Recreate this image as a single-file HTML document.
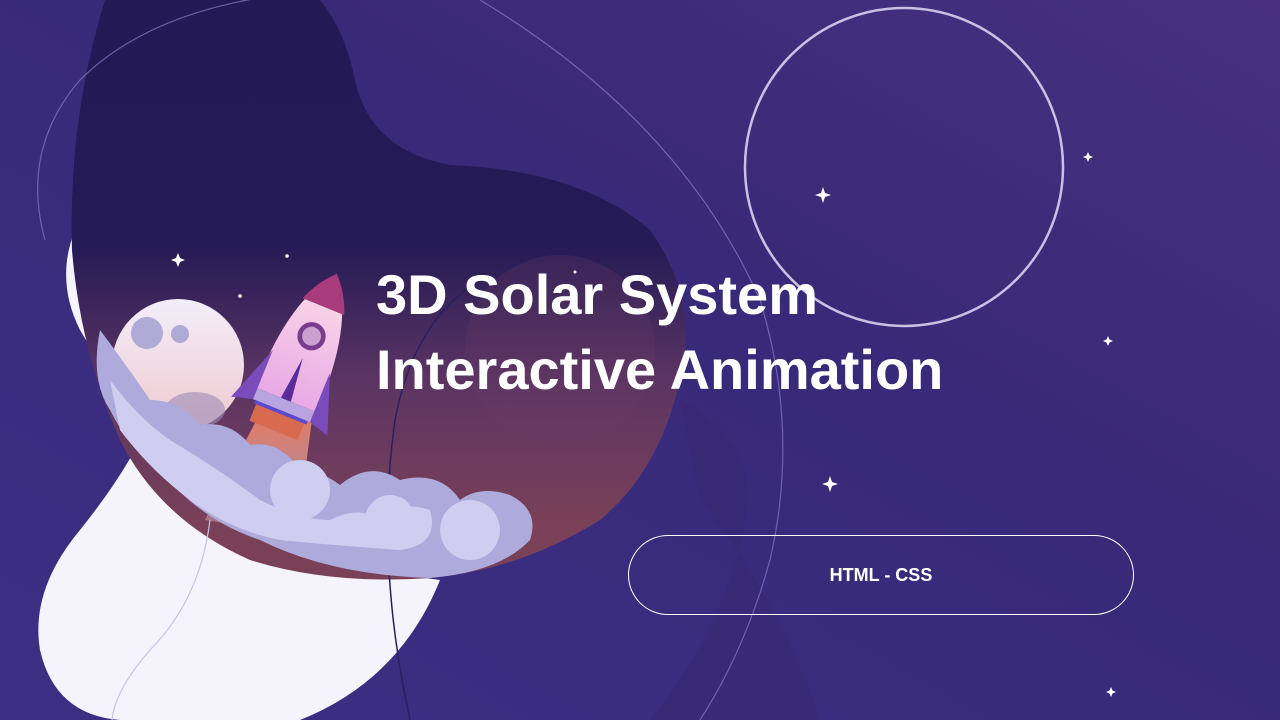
<!DOCTYPE html>
<html><head><meta charset="utf-8"><style>
html,body{margin:0;padding:0;width:1280px;height:720px;overflow:hidden;}
body{background:#3a2c7e;font-family:"Liberation Sans",sans-serif;position:relative;}
svg{position:absolute;left:0;top:0;}
.t{position:absolute;left:376px;color:#fff;font-weight:bold;font-size:56px;letter-spacing:0px;white-space:nowrap;line-height:64px;}
.btn{position:absolute;left:628px;top:535px;width:504px;height:78px;border:1.5px solid #fff;border-radius:40px;color:#fff;font-weight:bold;font-size:18px;display:flex;align-items:center;justify-content:center;}
</style></head><body>
<svg width="1280" height="720" viewBox="0 0 1280 720">
<defs>
<linearGradient id="bg" x1="0" y1="1" x2="1" y2="0">
<stop offset="0" stop-color="#3c2e84"/><stop offset="0.6" stop-color="#382a78"/><stop offset="1" stop-color="#48307e"/></linearGradient>
<linearGradient id="blob" x1="0" y1="0" x2="0" y2="1">
<stop offset="0" stop-color="#231a55"/><stop offset="0.42" stop-color="#241a55"/><stop offset="0.65" stop-color="#5a3463"/><stop offset="0.9" stop-color="#7a4058"/></linearGradient>
<linearGradient id="flame" x1="0" y1="0" x2="0" y2="1">
<stop offset="0" stop-color="#e7785a"/><stop offset="1" stop-color="#f3d4e4" stop-opacity="0.3"/></linearGradient>
<linearGradient id="rock" x1="0" y1="0" x2="0" y2="1">
<stop offset="0" stop-color="#fde0e8"/><stop offset="1" stop-color="#e9a9e6"/></linearGradient>
<linearGradient id="moon" x1="0" y1="0" x2="0" y2="1">
<stop offset="0" stop-color="#f2eefa"/><stop offset="1" stop-color="#f0c9cf"/></linearGradient>
</defs>
<rect width="1280" height="720" fill="url(#bg)"/>
<path d="M680 400 Q760 440 745 520 Q730 620 650 720 L820 720 Q780 600 700 500 Z" fill="#352870" opacity="0.5"/>
<path d="M75 230 Q55 280 80 330 Q110 380 140 440 Q120 480 80 530 Q30 590 40 650 Q55 715 120 720 L300 720 Q400 680 440 580 L300 560 L140 440 Z" fill="#f5f3fb"/>
<path d="M105 0 L320 0 Q345 30 355 80 Q370 150 450 165 Q580 170 650 230 Q700 300 680 380 Q660 470 600 520 Q520 570 430 578 Q330 585 250 560 Q160 520 120 440 Q80 350 72 250 Q68 120 105 0Z" fill="url(#blob)"/>
<path d="M45 240 Q20 150 80 80 Q160 0 330 -10" fill="none" stroke="#8a7ac8" stroke-width="1.2" opacity="0.7"/>
<path d="M480 0 Q680 120 760 300 Q800 430 770 560 Q745 650 700 720" fill="none" stroke="#8a7ac8" stroke-width="1.2" opacity="0.7"/>
<path d="M520 265 Q420 290 395 420 Q375 560 410 720" fill="none" stroke="#2a2060" stroke-width="1.5"/>
<path d="M210 520 Q200 600 150 650 Q115 690 112 720" fill="none" stroke="#c9c4e6" stroke-width="1.2"/>
<circle cx="560" cy="350" r="95" fill="#6a3b62" opacity="0.25"/>
<circle cx="178" cy="365" r="66" fill="url(#moon)"/>
<circle cx="147" cy="333" r="16" fill="#b0abd6"/>
<circle cx="180" cy="334" r="9" fill="#b0abd6"/>
<ellipse cx="195" cy="410" rx="30" ry="18" fill="#9a8ab8" opacity="0.6"/>
<path d="M262 410 L312 420 Q305 470 298 535 L205 520 Q235 460 262 410Z" fill="url(#flame)"/>
<g transform="translate(308 345) rotate(22) scale(1.18) translate(-310 -330)">
<rect x="288" y="392" width="44" height="16" fill="#d86a50"/>
<path d="M310 265 Q340 300 338 380 L282 380 Q280 300 310 265Z" fill="url(#rock)"/>
<path d="M310 265 Q323 278 329 295 L291 295 Q297 278 310 265Z" fill="#a83b7c"/>
<circle cx="310" cy="322" r="12" fill="#7a3d8e"/><circle cx="310" cy="322" r="8" fill="#c9a0cf"/>
<path d="M284 345 L266 395 L284 390Z" fill="#7a4bbb"/>
<path d="M336 345 L354 395 L336 390Z" fill="#7a4bbb"/>
<path d="M310 342 L316 392 L304 392Z" fill="#5a2c9a"/>
<rect x="284" y="380" width="52" height="10" fill="#b7a4e0"/>
<rect x="286" y="390" width="48" height="3" fill="#5a4ad0"/>
</g>
<g fill="#aeaadb">
<path d="M100 330 Q90 380 110 410 Q130 450 160 470 Q200 520 260 540 Q330 575 430 578 Q500 572 530 540 Q540 510 510 495 Q480 485 460 500 Q440 470 400 480 Q370 460 340 485 Q320 470 300 470 Q280 440 250 445 Q230 420 200 425 Q180 400 150 400 Q130 370 100 330Z"/>
</g>
<g fill="#cfcdf0">
<path d="M110 380 Q140 420 170 440 Q220 470 260 500 Q300 520 330 520 Q360 505 380 520 Q400 500 430 510 Q440 545 400 550 Q330 545 280 540 Q230 530 190 500 Q150 470 120 430Z"/>
<circle cx="300" cy="490" r="30"/><circle cx="470" cy="530" r="30"/><circle cx="390" cy="520" r="25"/>
</g>
<g fill="#fff">
<path d="M178 253 l2 5 l5 2 l-5 2 l-2 5 l-2 -5 l-5 -2 l5 -2z"/>
<circle cx="287" cy="256" r="1.8"/><circle cx="240" cy="296" r="1.8"/><circle cx="575" cy="272" r="1.5"/>
<path d="M823 187 l2 6 l6 2 l-6 2 l-2 6 l-2 -6 l-6 -2 l6 -2z"/>
<path d="M830 476 l2 6 l6 2 l-6 2 l-2 6 l-2 -6 l-6 -2 l6 -2z"/>
<path d="M1088 152 l1.5 3.5 l3.5 1.5 l-3.5 1.5 l-1.5 3.5 l-1.5 -3.5 l-3.5 -1.5 l3.5 -1.5z"/>
<path d="M1108 336 l1.5 3.5 l3.5 1.5 l-3.5 1.5 l-1.5 3.5 l-1.5 -3.5 l-3.5 -1.5 l3.5 -1.5z"/>
<path d="M1111 687 l1.5 3.5 l3.5 1.5 l-3.5 1.5 l-1.5 3.5 l-1.5 -3.5 l-3.5 -1.5 l3.5 -1.5z"/>
</g>
<circle cx="904" cy="167" r="159" fill="none" stroke="#c9c0e4" stroke-width="2.5"/>
</svg>
<div class="t" style="top:263px">3D Solar System</div>
<div class="t" style="top:338px">Interactive Animation</div>
<div class="btn">HTML - CSS</div>
</body></html>
